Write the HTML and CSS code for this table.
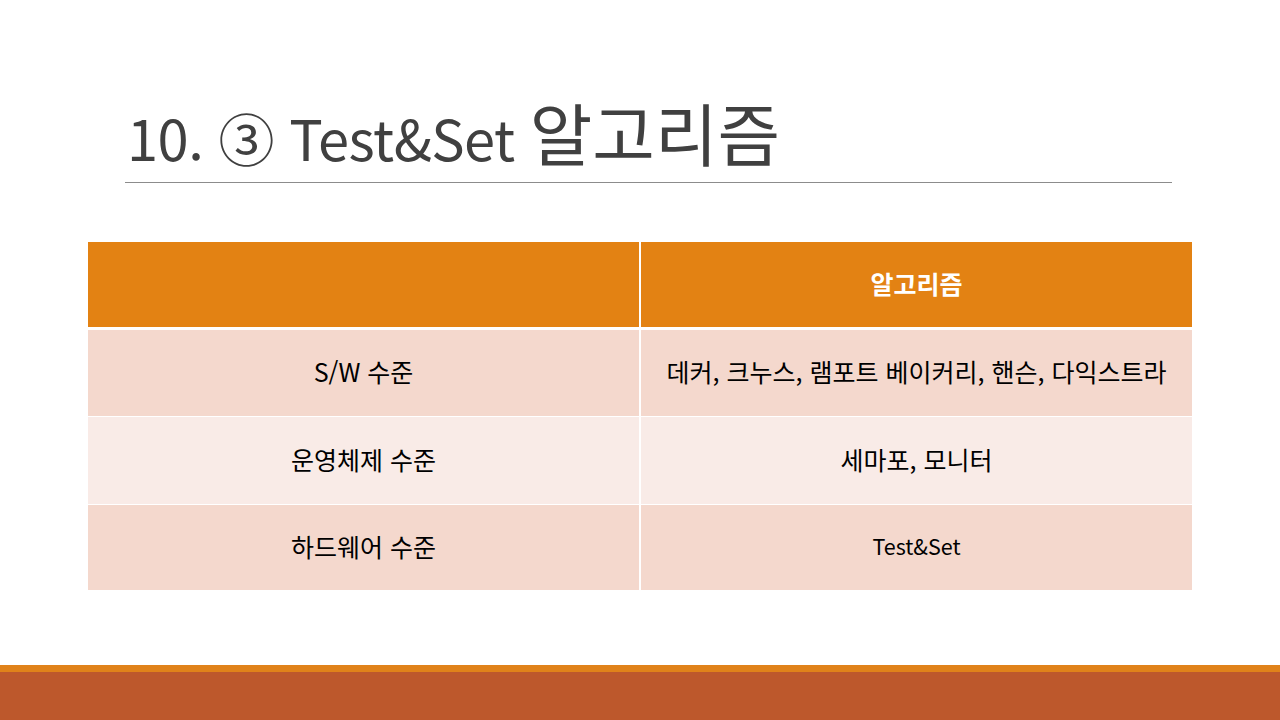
FILE: index.html
```html
<!DOCTYPE html>
<html lang="ko">
<head>
<meta charset="utf-8">
<link rel="stylesheet" href="styles.css">
</head>
<body>
<div class="slide">
  <header class="title-block">
    <h1 class="title">10. ③ Test&amp;Set <span class="title-ko">알고리즘</span></h1>
    <div class="rule"></div>
  </header>
  <main class="content">
    <div class="table">
      <div class="cell head"></div>
      <div class="cell head bold">알고리즘</div>
      <div class="cell odd">S/W 수준</div>
      <div class="cell odd">데커, 크누스, 램포트 베이커리, 핸슨, 다익스트라</div>
      <div class="cell even">운영체제 수준</div>
      <div class="cell even">세마포, 모니터</div>
      <div class="cell odd">하드웨어 수준</div>
      <div class="cell odd small">Test&amp;Set</div>
    </div>
  </main>
  <footer class="footer">
    <div class="stripe"></div>
    <div class="band"></div>
  </footer>
</div>
</body>
</html>
```
FILE: styles.css
```css
* { box-sizing: border-box; }
html, body { margin: 0; padding: 0; }
body {
  width: 1280px;
  height: 720px;
  overflow: hidden;
  background: #ffffff;
  font-family: "Noto Sans CJK KR", "Noto Sans", sans-serif;
}
.slide {
  width: 1280px;
  height: 720px;
  display: flex;
  flex-direction: column;
}
.title-block {
  padding: 96px 108px 0 125px;
}
.title {
  margin: 0 0 0 2px;
  height: 86px;
  font-weight: 400;
  font-size: 56px;
  line-height: 82px;
  color: #404040;
  letter-spacing: -0.5px;
  white-space: nowrap;
  overflow: visible;
}
.title-ko {
  font-size: 68px;
  line-height: 1;
  letter-spacing: 0;
}
.rule {
  height: 1px;
  background: #8c8c8c;
}
.content {
  flex: 1;
  padding: 59px 88px 0 88px;
}
.table {
  display: grid;
  grid-template-columns: 551px 551px;
  grid-template-rows: 87px 86px 87px 85px;
  gap: 1px 2px;
  width: 1104px;
}
.cell {
  display: flex;
  align-items: center;
  justify-content: center;
  padding-bottom: 4px;
  font-size: 25px;
  color: #000000;
}
.head {
  background: #e38213;
  color: #ffffff;
  border-bottom: 2px solid #ffffff;
}
.bold { font-weight: 700; font-size: 25px; }
.odd { background: #f4d8cd; }
.even { background: #f9ebe7; }
.small { font-size: 21.5px; }
.footer {
  height: 55px;
  display: flex;
  flex-direction: column;
}
.stripe { height: 7px; background: #e0821a; }
.band { flex: 1; background: #bd582c; }
```
